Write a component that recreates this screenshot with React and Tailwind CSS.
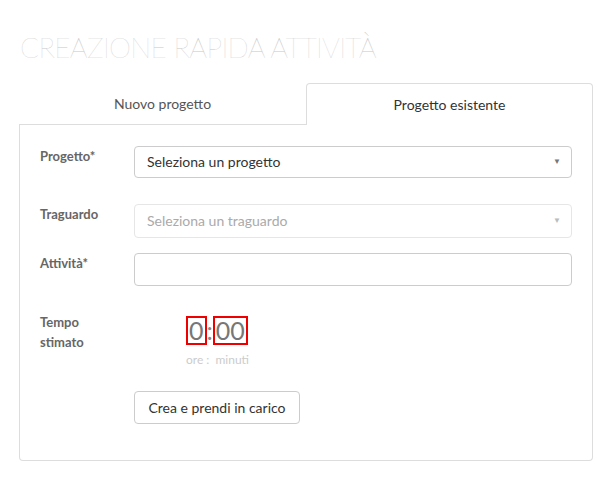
import { useState } from "react";

const Caret = ({ light }) => (
    <span className={`text-[8px] ${light ? "text-[#bbb]" : "text-[#777]"}`}>▼</span>
);

const App = () => {
    const [tab, setTab] = useState(1);
    const [attivita, setAttivita] = useState("");

    return (
        <div className="min-h-screen bg-white px-[19px] pt-[30px] font-['Lato','Liberation_Sans',sans-serif]">
            {/* Title */}
            <h1 className="pl-px text-[28px] font-thin leading-[34px] tracking-[-0.7px] text-[#c8c8c8]">
                CREAZIONE RAPIDA ATTIVITÀ
            </h1>

            {/* Tabs */}
            <div className="mt-[19px] flex w-[574px]">
                <button
                    onClick={() => setTab(0)}
                    className={`h-[42px] w-1/2 text-sm ${tab === 0 ? "-mb-px rounded-t border border-b-0 border-[#ddd] bg-white text-[#333]" : "border-b border-[#ddd] text-[#555]"}`}
                >
                    Nuovo progetto
                </button>
                <button
                    onClick={() => setTab(1)}
                    className={`h-[42px] w-1/2 text-sm ${tab === 1 ? "-mb-px rounded-t border border-b-0 border-[#ddd] bg-white text-[#333]" : "border-b border-[#ddd] text-[#555]"}`}
                >
                    Progetto esistente
                </button>
            </div>

            {/* Panel */}
            <div className="w-[574px] rounded-b border border-t-0 border-[#ddd] px-5 pb-[36px] pt-[21px]">
                <div className="flex">
                    <label className="w-[94px] text-[13px] font-bold leading-5 text-[#666]">Progetto*</label>
                    <div className="flex h-[32px] flex-1 items-center justify-between rounded border border-[#ccc] pl-3 pr-[10px] text-sm text-[#333]">
                        <span>Seleziona un progetto</span>
                        <Caret />
                    </div>
                </div>

                <div className="mt-[26px] flex">
                    <label className="w-[94px] text-[13px] font-bold leading-5 text-[#666]">Traguardo</label>
                    <div className="flex h-[34px] flex-1 items-center justify-between rounded border border-[#e6e6e6] pl-3 pr-[10px] text-sm text-[#aaa]">
                        <span>Seleziona un traguardo</span>
                        <Caret light />
                    </div>
                </div>

                <div className="mt-[15px] flex">
                    <label className="w-[94px] text-[13px] font-bold leading-5 text-[#666]">Attività*</label>
                    <input
                        value={attivita}
                        onChange={(e) => setAttivita(e.target.value)}
                        className="h-[33px] flex-1 rounded border border-[#ccc] px-3 text-sm text-[#333] outline-none"
                    />
                </div>

                <div className="mt-[26px] flex">
                    <label className="w-[94px] text-[13px] font-bold leading-5 text-[#666]">
                        Tempo
                        <br />
                        stimato
                    </label>
                    <div className="ml-[52px] pt-[4px]">
                        <div className="flex items-center text-[25px] font-normal leading-[25px] text-[#777]">
                            <span className="border-2 border-[#e00] px-px">0</span>
                            <span className="text-[#888]">:</span>
                            <span className="border-2 border-[#e00] px-px">00</span>
                        </div>
                        <div className="mt-[9px] text-[12px] leading-3 text-[#ccc]">ore : &nbsp;minuti</div>
                    </div>
                </div>

                <div className="ml-[94px] mt-[25px]">
                    <button className="h-[33px] w-[166px] rounded border border-[#ccc] text-sm text-[#333]">
                        Crea e prendi in carico
                    </button>
                </div>
            </div>
        </div>
    );
};

export default App;
